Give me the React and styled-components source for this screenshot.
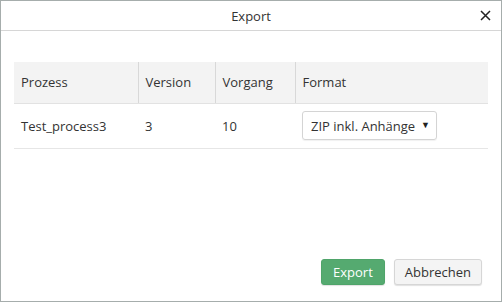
import React from "react";
import styled, { createGlobalStyle } from "styled-components";

const Global = createGlobalStyle`
  html, body { margin: 0; padding: 0; background: #fff; }
  body { font-family: "Open Sans", "Liberation Sans", sans-serif; font-size: 13px; color: #333; }
  * { box-sizing: border-box; }
`;

const Dialog = styled.div`
  width: 502px;
  height: 302px;
  border: 1px solid #a6adac;
  display: flex;
  flex-direction: column;
  background: #fff;
`;

const Header = styled.div`
  height: 30px;
  border-bottom: 1px solid #d6d6d6;
  display: flex;
  align-items: center;
  justify-content: center;
  position: relative;
  font-size: 13px;
  color: #333;
`;

const Close = styled.button`
  position: absolute;
  right: 9px;
  top: 7px;
  width: 14px;
  height: 14px;
  padding: 0;
  border: 0;
  background: none;
  display: flex;
  align-items: center;
  justify-content: center;
`;

const Body = styled.div`
  flex: 1;
  padding: 31px 13px 0 13px;
`;

const Table = styled.table`
  width: 474px;
  border-collapse: collapse;
`;

const Th = styled.th`
  background: #f3f3f3;
  height: 41px;
  text-align: left;
  font-weight: 400;
  padding: 0 7px;
  border-left: ${p => (p.first ? "none" : "1px solid #d8d8d8")};
  border-bottom: 1px solid #e2e2e2;
  width: ${p => p.w}px;
`;

const Td = styled.td`
  height: 45px;
  padding: 0 7px;
  border-bottom: 1px solid #e6e6e6;
  vertical-align: middle;
`;

const Select = styled.div`
  width: 135px;
  height: 29px;
  border: 1px solid #d4d4d4;
  border-radius: 3px;
  display: flex;
  align-items: center;
  justify-content: space-between;
  padding: 0 6px 0 8px;
  box-shadow: 0 1px 1px rgba(0,0,0,0.06);
`;

const Arrow = styled.span`
  font-size: 9px;
  color: #222;
  margin-top: -3px;
`;

const Footer = styled.div`
  display: flex;
  justify-content: flex-end;
  align-items: flex-end;
  gap: 9px;
  padding: 0 19px 16px 0;
`;

const Button = styled.button`
  font-family: "Open Sans", "Liberation Sans", sans-serif;
  font-size: 13px;
  height: 26px;
  padding: 0 ${p => (p.primary ? 11 : 10)}px;
  border-radius: 3px;
  border: 1px solid ${p => (p.primary ? "#4fa46a" : "#d6d6d6")};
  background: ${p => (p.primary ? "#55aa70" : "#f4f4f4")};
  color: ${p => (p.primary ? "#fff" : "#333")};
  box-shadow: 0 1px 1px rgba(0,0,0,0.12);
`;

export default function App() {
  return (
    <>
      <Global />
      <Dialog>
        <Header>
          Export
          <Close aria-label="close">
            <svg width="11" height="11" viewBox="0 0 11 11">
              <path d="M1 1L10 10M10 1L1 10" stroke="#222" strokeWidth="1.5" />
            </svg>
          </Close>
        </Header>
        <Body>
          <Table>
            <thead>
              <tr>
                <Th first w={124}>Prozess</Th>
                <Th w={77}>Version</Th>
                <Th w={80}>Vorgang</Th>
                <Th>Format</Th>
              </tr>
            </thead>
            <tbody>
              <tr>
                <Td>Test_process3</Td>
                <Td>3</Td>
                <Td>10</Td>
                <Td>
                  <Select>
                    <span>ZIP inkl. Anhänge</span>
                    <Arrow>▼</Arrow>
                  </Select>
                </Td>
              </tr>
            </tbody>
          </Table>
        </Body>
        <Footer>
          <Button primary>Export</Button>
          <Button>Abbrechen</Button>
        </Footer>
      </Dialog>
    </>
  );
}
